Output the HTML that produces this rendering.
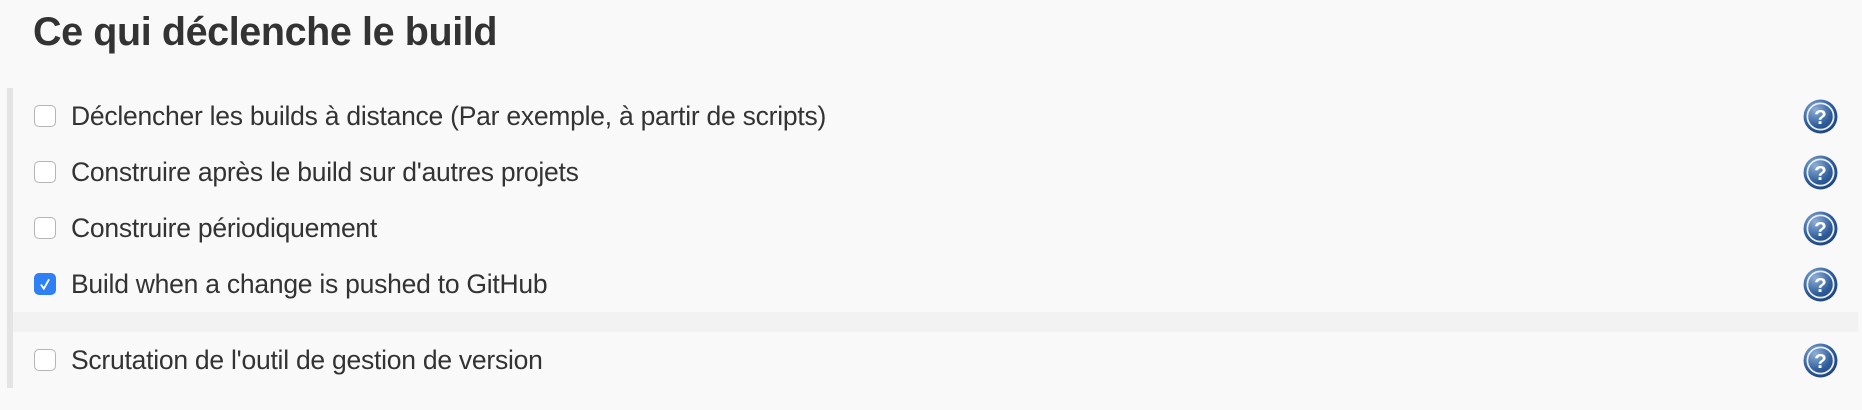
<!DOCTYPE html>
<html><head><meta charset="utf-8"><style>
body{margin:0;width:1862px;height:410px;background:#f9f9f9;font-family:"Liberation Sans",Helvetica,Arial,sans-serif;color:#333;position:relative;overflow:hidden}
h1{position:absolute;left:33px;top:10px;margin:0;font-size:39.5px;font-weight:bold;color:#333;letter-spacing:-0.4px}
.bar{position:absolute;left:7px;top:88px;width:6px;height:300px;background:#e4e4e4}
.band{position:absolute;left:13px;top:312px;width:1845px;height:20px;background:#f2f2f2}
.row{position:absolute;left:34px;height:30px;display:flex;align-items:center}
.cb{width:22px;height:22px;border:1px solid #b5b5b5;border-radius:5px;background:#fff;box-sizing:border-box}
.cb.on{background:#2f7ff5;border-color:#2f7ff5;display:flex;align-items:center;justify-content:center}
.t{margin-left:15px;font-size:26.5px;letter-spacing:-0.25px}
.help{position:absolute;left:1803px;width:35px;height:35px}
</style></head><body>
<h1>Ce qui déclenche le build</h1>
<div class="bar"></div><div class="band"></div>
<div class="row" style="top:101px"><div class="cb"></div><span class="t">Déclencher les builds à distance (Par exemple, à partir de scripts)</span></div>
<div class="row" style="top:157px"><div class="cb"></div><span class="t">Construire après le build sur d'autres projets</span></div>
<div class="row" style="top:213px"><div class="cb"></div><span class="t">Construire périodiquement</span></div>
<div class="row" style="top:269px"><div class="cb on"><svg width="14" height="14" viewBox="0 0 12 12"><path d="M2.5 6.5L5 10L9.5 2" fill="none" stroke="#fff" stroke-width="1.6"/></svg></div><span class="t">Build when a change is pushed to GitHub</span></div>
<div class="row" style="top:345px"><div class="cb"></div><span class="t">Scrutation de l'outil de gestion de version</span></div>
<svg width="0" height="0" style="position:absolute"><defs><radialGradient id="g" cx="0.35" cy="0.3" r="0.8"><stop offset="0" stop-color="#8fb0d8"/><stop offset="0.6" stop-color="#2f5d9a"/><stop offset="1" stop-color="#1d3f75"/></radialGradient></defs></svg>
<svg class="help" style="top:99px" viewBox="0 0 32 32"><circle cx="16" cy="16" r="15.5" fill="url(#g)"/><circle cx="16" cy="16" r="12" fill="none" stroke="#e8eef7" stroke-width="1.6"/><text x="16" y="23" text-anchor="middle" font-family="Liberation Sans" font-weight="bold" font-size="19" fill="#fff">?</text></svg>
<svg class="help" style="top:155px" viewBox="0 0 32 32"><circle cx="16" cy="16" r="15.5" fill="url(#g)"/><circle cx="16" cy="16" r="12" fill="none" stroke="#e8eef7" stroke-width="1.6"/><text x="16" y="23" text-anchor="middle" font-family="Liberation Sans" font-weight="bold" font-size="19" fill="#fff">?</text></svg>
<svg class="help" style="top:211px" viewBox="0 0 32 32"><circle cx="16" cy="16" r="15.5" fill="url(#g)"/><circle cx="16" cy="16" r="12" fill="none" stroke="#e8eef7" stroke-width="1.6"/><text x="16" y="23" text-anchor="middle" font-family="Liberation Sans" font-weight="bold" font-size="19" fill="#fff">?</text></svg>
<svg class="help" style="top:267px" viewBox="0 0 32 32"><circle cx="16" cy="16" r="15.5" fill="url(#g)"/><circle cx="16" cy="16" r="12" fill="none" stroke="#e8eef7" stroke-width="1.6"/><text x="16" y="23" text-anchor="middle" font-family="Liberation Sans" font-weight="bold" font-size="19" fill="#fff">?</text></svg>
<svg class="help" style="top:343px" viewBox="0 0 32 32"><circle cx="16" cy="16" r="15.5" fill="url(#g)"/><circle cx="16" cy="16" r="12" fill="none" stroke="#e8eef7" stroke-width="1.6"/><text x="16" y="23" text-anchor="middle" font-family="Liberation Sans" font-weight="bold" font-size="19" fill="#fff">?</text></svg>
</body></html>
